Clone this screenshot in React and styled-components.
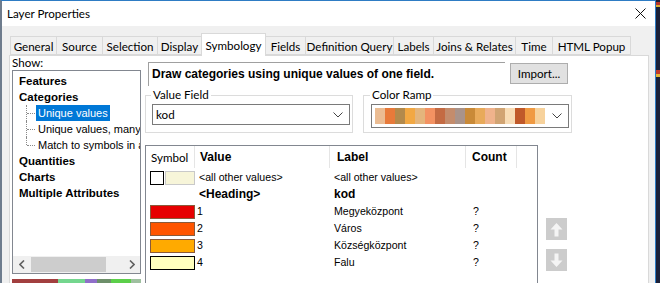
import React from "react";
import styled, { createGlobalStyle } from "styled-components";

const UI_FONT = `"Lato", "Noto Sans", sans-serif`;
const CLASSIC_FONT = `"Liberation Sans", Arial, sans-serif`;

const TABS = [
  { name: "General", width: 47 },
  { name: "Source", width: 47 },
  { name: "Selection", width: 56 },
  { name: "Display", width: 45 },
  { name: "Symbology", width: 65, active: true },
  { name: "Fields", width: 41 },
  { name: "Definition Query", width: 89 },
  { name: "Labels", width: 41 },
  { name: "Joins & Relates", width: 83 },
  { name: "Time", width: 38 },
  { name: "HTML Popup", width: 79 },
];

const RAMP = [
  "#ebbc92", "#e87a3a", "#b38a4c", "#f2a843", "#e4b57c", "#f39262",
  "#c46b43", "#c48c6c", "#a9938a", "#c98a38", "#e8aa5a", "#f0b38c",
  "#d1a473", "#f8dcb5", "#c0592a", "#f09a42", "#f7d29c",
];

const ROWS = [
  { color: "#e60000", value: "1", label: "Megyeközpont" },
  { color: "#ff5500", value: "2", label: "Város" },
  { color: "#ffaa00", value: "3", label: "Községközpont" },
  { color: "#ffffbe", value: "4", label: "Falu", outlined: true },
];

const GlobalStyle = createGlobalStyle`
  html, body { margin: 0; padding: 0; background: #1b2038; }
  body { font-family: ${CLASSIC_FONT}; color: #000; }
`;

const Screen = styled.div`
  display: flex;
  width: 660px;
  height: 283px;
  overflow: hidden;
`;

const Window = styled.div`
  width: 656px;
  box-sizing: border-box;
  display: flex;
  flex-direction: column;
  border-left: 2px solid #6e7c8d;
  border-right: 1px solid #2e7cc4;
  border-top: 1px solid #2e7cc4;
  background: #f0f0f0;
`;

const Desktop = styled.div`
  flex: 1;
  background:
    linear-gradient(#1b2038 0 2px, #b8342a 2px 5px, #e0b030 5px 7px, #1b2038 7px 70px, #c23a2a 70px 74px, #e6b534 74px 77px, #1b2038 77px);
`;

const TitleBar = styled.div`
  height: 25px;
  flex: none;
  display: flex;
  align-items: center;
  justify-content: space-between;
  background: #fff;
  padding: 0 9px 0 5px;
`;

const Title = styled.span`
  font-family: ${UI_FONT};
  font-size: 11.6px;
`;

const Body = styled.div`
  flex: 1;
  display: flex;
  flex-direction: column;
  padding: 0 6px 0 7px;
`;

const TabStrip = styled.div`
  height: 29px;
  flex: none;
  display: flex;
  align-items: flex-end;
  padding-left: 2px;
`;

const Tab = styled.div`
  width: ${(p) => p.$width}px;
  height: ${(p) => (p.$active ? 23 : 19)}px;
  margin-bottom: ${(p) => (p.$active ? -1 : 0)}px;
  box-sizing: border-box;
  display: flex;
  align-items: center;
  justify-content: center;
  padding-top: ${(p) => (p.$active ? 0 : 1)}px;
  border: 1px solid #d9d9d9;
  border-bottom: ${(p) => (p.$active ? "none" : "1px solid #d9d9d9")};
  margin-left: -1px;
  background: ${(p) => (p.$active ? "#fff" : "#f0f0f0")};
  font-family: ${UI_FONT};
  font-size: 11.6px;
  white-space: nowrap;
  position: relative;
  z-index: ${(p) => (p.$active ? 1 : 0)};
`;

const Panel = styled.div`
  width: 640px;
  flex: 1;
  box-sizing: border-box;
  border: 1px solid #d9d9d9;
  border-bottom: none;
  background: #fff;
  display: flex;
  gap: 4px;
  padding-left: 2px;
`;

const Sidebar = styled.div`
  width: 129px;
  display: flex;
  flex-direction: column;
`;

const ShowLabel = styled.div`
  height: 14px;
  line-height: 14px;
  font-family: ${UI_FONT};
  font-size: 11.6px;
`;

const TreeBox = styled.div`
  height: 204px;
  box-sizing: border-box;
  border: 1px solid #828790;
  display: flex;
  flex-direction: column;
`;

const TreeList = styled.div`
  flex: 1;
  overflow: hidden;
  padding-top: 2px;
  font-size: 11px;
`;

const TreeItem = styled.div`
  height: 16px;
  line-height: 16px;
  padding-left: 6px;
  font-size: 11.5px;
  font-weight: bold;
  white-space: nowrap;
`;

const ChildItem = styled.div`
  height: 16px;
  display: flex;
  align-items: center;
  white-space: nowrap;
`;

const Connector = styled.span`
  width: 23px;
  height: 16px;
  flex: none;
  position: relative;

  &::before {
    content: "";
    position: absolute;
    left: 13px;
    top: 0;
    height: ${(p) => (p.$last ? 8 : 16)}px;
    border-left: 1px dotted #8a8a8a;
  }
  &::after {
    content: "";
    position: absolute;
    left: 14px;
    top: 8px;
    width: 8px;
    border-top: 1px dotted #8a8a8a;
  }
`;

const ChildLabel = styled.span`
  height: 16px;
  line-height: 16px;
  padding: 0 2px;
  background: ${(p) => (p.$selected ? "#0078d7" : "transparent")};
  color: ${(p) => (p.$selected ? "#fff" : "#000")};
`;

const HScroll = styled.div`
  height: 17px;
  flex: none;
  display: flex;
  align-items: center;
  background: #f0f0f0;
`;

const ScrollArrow = styled.div`
  width: 17px;
  height: 17px;
  display: flex;
  align-items: center;
  justify-content: center;
`;

const ScrollTrack = styled.div`
  flex: 1;
  height: 15px;
  display: flex;
`;

const ScrollThumb = styled.div`
  width: 75px;
  margin-left: 1px;
  background: #cdcdcd;
`;

const PreviewStrip = styled.div`
  margin-top: 5px;
  height: 8px;
  display: flex;
`;

const PreviewBlock = styled.div`
  width: ${(p) => p.$w}px;
  background: ${(p) => p.$c};
`;

const Main = styled.div`
  flex: 1;
  display: flex;
  flex-direction: column;
  padding-top: 6px;
`;

const TopRow = styled.div`
  display: flex;
  align-items: flex-start;
  gap: 5px;
  padding-left: 3px;
`;

const Description = styled.div`
  width: 357px;
  height: 24px;
  box-sizing: border-box;
  border-top: 1px solid #a0a0a0;
  border-left: 1px solid #a0a0a0;
  padding-left: 3px;
  line-height: 22px;
  font-size: 12px;
  font-weight: bold;
  white-space: nowrap;
`;

const Button = styled.div`
  width: 58px;
  height: 21px;
  margin-top: 1px;
  box-sizing: border-box;
  border: 1px solid #adadad;
  background: #e1e1e1;
  display: flex;
  align-items: center;
  justify-content: center;
  font-family: ${UI_FONT};
  font-size: 11.6px;
`;

const GroupRow = styled.div`
  display: flex;
  gap: 10px;
  margin-top: 2px;
`;

const Group = styled.fieldset`
  margin: 0;
  width: ${(p) => p.$width}px;
  box-sizing: border-box;
  border: 1px solid #dcdcdc;
  padding: 2px 0 ${(p) => p.$bottom}px ${(p) => p.$inset}px;
  min-width: 0;

  legend {
    padding: 0 2px;
    margin-left: -1px;
    height: 14px;
    line-height: 14px;
    font-family: ${UI_FONT};
    font-size: 11.6px;
  }
`;

const Combo = styled.div`
  width: 198px;
  height: ${(p) => p.$height}px;
  box-sizing: border-box;
  border: 1px solid #7a7a7a;
  background: #fff;
  display: flex;
  align-items: center;
  padding: 0 6px 0 3px;
  font-family: ${UI_FONT};
  font-size: 11.6px;
`;

const ComboValue = styled.div`
  flex: 1;
  display: flex;
  align-items: center;
`;

const Ramp = styled.div`
  display: flex;
  height: 16px;
`;

const RampStop = styled.div`
  width: 10px;
  background: ${(p) => p.$c};
`;

const TableRow = styled.div`
  display: flex;
  margin-top: 12px;
`;

const Table = styled.div`
  width: 393px;
  height: 160px;
  box-sizing: border-box;
  border: 1px solid #828790;
  font-size: 10.6px;
`;

const COLUMNS = "49px 135px 136px 51px 1fr";

const HeaderRow = styled.div`
  display: grid;
  grid-template-columns: ${COLUMNS};
  height: 22px;
`;

const HeaderCell = styled.div`
  display: flex;
  align-items: center;
  padding-left: ${(p) => p.$pad}px;
  border-right: ${(p) => (p.$last ? "none" : "1px solid #e5e5e5")};
  font-family: ${(p) => (p.$plain ? UI_FONT : CLASSIC_FONT)};
  font-size: ${(p) => (p.$plain ? 11.6 : 12)}px;
  font-weight: ${(p) => (p.$plain ? "normal" : "bold")};
`;

const DataRow = styled.div`
  display: grid;
  grid-template-columns: ${COLUMNS};
  height: 17px;
  font-weight: ${(p) => (p.$bold ? "bold" : "normal")};
  font-size: ${(p) => (p.$bold ? 12 : 10.6)}px;
`;

const Cell = styled.div`
  display: flex;
  align-items: center;
  padding-left: ${(p) => p.$pad}px;
  white-space: nowrap;
`;

const SymbolCell = styled.div`
  display: flex;
  align-items: flex-start;
  padding: 3px 0 0 4px;
  gap: 1px;
`;

const Swatch = styled.div`
  width: ${(p) => p.$w}px;
  height: 14px;
  box-sizing: border-box;
  background: ${(p) => p.$c};
  border: 1px solid ${(p) => p.$border};
`;

const ArrowColumn = styled.div`
  display: flex;
  flex-direction: column;
  gap: 9px;
  margin: 73px 0 0 8px;
`;

const MoveButton = styled.div`
  width: 21px;
  height: 22px;
  background: #cccccc;
  display: flex;
  align-items: center;
  justify-content: center;
`;

const Chevron = () => (
  <svg width="10" height="6" viewBox="0 0 10 6">
    <path d="M0.5 0.5 L5 5 L9.5 0.5" fill="none" stroke="#444" strokeWidth="1" />
  </svg>
);

const CloseIcon = () => (
  <svg width="11" height="11" viewBox="0 0 11 11">
    <path d="M0.5 0.5 L10.5 10.5 M10.5 0.5 L0.5 10.5" stroke="#111" strokeWidth="1" />
  </svg>
);

const ArrowIcon = ({ down }) => (
  <svg width="13" height="15" viewBox="0 0 13 15" style={down ? { transform: "rotate(180deg)" } : undefined}>
    <path d="M6.5 1 L12.5 7.5 L8.5 7.5 L8.5 14.5 L4.5 14.5 L4.5 7.5 L0.5 7.5 Z" fill="#f4f4f4" />
  </svg>
);

const SmallArrow = ({ right }) => (
  <svg width="6" height="9" viewBox="0 0 6 9">
    <path d={right ? "M1 0.5 L5 4.5 L1 8.5" : "M5 0.5 L1 4.5 L5 8.5"} fill="none" stroke="#606060" strokeWidth="1.6" />
  </svg>
);

const App = () => (
  <>
    <GlobalStyle />
    <Screen>
      <Window>
        <TitleBar>
          <Title>Layer Properties</Title>
          <CloseIcon />
        </TitleBar>
        <Body>
          <TabStrip>
            {TABS.map((t) => (
              <Tab key={t.name} $width={t.width} $active={t.active}>
                {t.name}
              </Tab>
            ))}
          </TabStrip>
          <Panel>
            <Sidebar>
              <ShowLabel>Show:</ShowLabel>
              <TreeBox>
                <TreeList>
                  <TreeItem>Features</TreeItem>
                  <TreeItem>Categories</TreeItem>
                  <ChildItem>
                    <Connector />
                    <ChildLabel $selected>Unique values</ChildLabel>
                  </ChildItem>
                  <ChildItem>
                    <Connector />
                    <ChildLabel>Unique values, many fields</ChildLabel>
                  </ChildItem>
                  <ChildItem>
                    <Connector $last />
                    <ChildLabel>Match to symbols in a style</ChildLabel>
                  </ChildItem>
                  <TreeItem>Quantities</TreeItem>
                  <TreeItem>Charts</TreeItem>
                  <TreeItem>Multiple Attributes</TreeItem>
                </TreeList>
                <HScroll>
                  <ScrollArrow><SmallArrow /></ScrollArrow>
                  <ScrollTrack><ScrollThumb /></ScrollTrack>
                  <ScrollArrow><SmallArrow right /></ScrollArrow>
                </HScroll>
              </TreeBox>
              <PreviewStrip>
                <PreviewBlock $w={46} $c="#a23f3f" />
                <PreviewBlock $w={27} $c="#74d68e" />
                <PreviewBlock $w={12} $c="#8f6fc9" />
                <PreviewBlock $w={14} $c="#6d8f6a" />
                <PreviewBlock $w={20} $c="#5ccf4a" />
                <PreviewBlock $w={10} $c="#9fc0a0" />
              </PreviewStrip>
            </Sidebar>
            <Main>
              <TopRow>
                <Description>Draw categories using unique values of one field.</Description>
                <Button>Import...</Button>
              </TopRow>
              <GroupRow>
                <Group $width={208} $inset={6} $bottom={6}>
                  <legend>Value Field</legend>
                  <Combo $height={21}>
                    <ComboValue>kod</ComboValue>
                    <Chevron />
                  </Combo>
                </Group>
                <Group $width={209} $inset={7} $bottom={4}>
                  <legend>Color Ramp</legend>
                  <Combo $height={24}>
                    <ComboValue>
                      <Ramp>
                        {RAMP.map((c, i) => (
                          <RampStop key={i} $c={c} />
                        ))}
                      </Ramp>
                    </ComboValue>
                    <Chevron />
                  </Combo>
                </Group>
              </GroupRow>
              <TableRow>
                <Table>
                  <HeaderRow>
                    <HeaderCell $plain $pad={5}>Symbol</HeaderCell>
                    <HeaderCell $pad={5}>Value</HeaderCell>
                    <HeaderCell $pad={7}>Label</HeaderCell>
                    <HeaderCell $pad={6}>Count</HeaderCell>
                    <HeaderCell $last />
                  </HeaderRow>
                  <DataRow>
                    <SymbolCell>
                      <Swatch $w={14} $c="#fff" $border="#000" />
                      <Swatch $w={31} $c="#f7f5d9" $border="#c9c9c9" />
                    </SymbolCell>
                    <Cell $pad={4}>&lt;all other values&gt;</Cell>
                    <Cell $pad={4}>&lt;all other values&gt;</Cell>
                    <Cell />
                    <Cell />
                  </DataRow>
                  <DataRow $bold>
                    <Cell />
                    <Cell $pad={4}>&lt;Heading&gt;</Cell>
                    <Cell $pad={4}>kod</Cell>
                    <Cell />
                    <Cell />
                  </DataRow>
                  {ROWS.map((r) => (
                    <DataRow key={r.value}>
                      <SymbolCell>
                        <Swatch $w={46} $c={r.color} $border={r.outlined ? "#000" : "#8a5a3a"} />
                      </SymbolCell>
                      <Cell $pad={2}>{r.value}</Cell>
                      <Cell $pad={4}>{r.label}</Cell>
                      <Cell $pad={7}>?</Cell>
                      <Cell />
                    </DataRow>
                  ))}
                </Table>
                <ArrowColumn>
                  <MoveButton><ArrowIcon /></MoveButton>
                  <MoveButton><ArrowIcon down /></MoveButton>
                </ArrowColumn>
              </TableRow>
            </Main>
          </Panel>
        </Body>
      </Window>
      <Desktop />
    </Screen>
  </>
);

export default App;
